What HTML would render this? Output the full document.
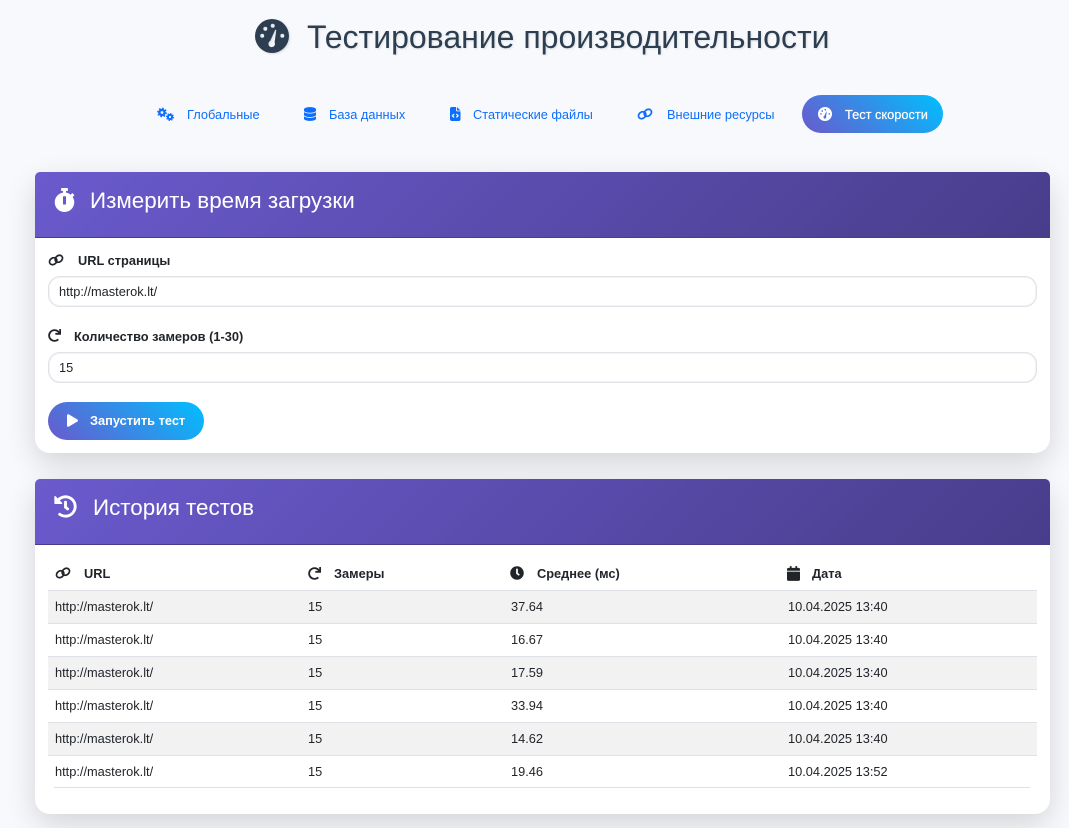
<!DOCTYPE html>
<html lang="ru"><head><meta charset="utf-8"><title>Тестирование производительности</title>
<style>
*{box-sizing:border-box}
html,body{margin:0;padding:0}
body{position:relative;width:1069px;height:828px;overflow:hidden;background:#f8f9fc;font-family:"Liberation Sans",sans-serif;font-size:12.8px;color:#212529}
.a{position:absolute;white-space:nowrap}
svg{position:absolute;display:block;fill:currentColor}
.nav{color:#0d6efd;line-height:16px;top:107px}
.pill{position:absolute;border-radius:19px;background:linear-gradient(45deg,#6a5acd,#00bfff);height:38px}
.card{position:absolute;left:35px;width:1015px;background:#fff;border-radius:15px;box-shadow:0 10px 30px rgba(0,0,0,.15)}
.hd{position:absolute;left:0;top:0;width:1015px;height:66px;border-radius:5px 5px 0 0;background:linear-gradient(135deg,#6a5acd,#483d8b);border-bottom:1px solid #483d8b}
.ttl{color:#fff;font-size:22.4px;line-height:28px}
.lbl{font-weight:bold;line-height:16px}
.inp{position:absolute;left:48px;width:989px;height:31px;border:1px solid #dfe2e6;border-radius:12px;background:#fff;padding-left:10px;line-height:29px;box-shadow:0 0 0 1px #f2f3f4 inset}
.row{position:absolute;left:48px;width:989px;height:33px;border-bottom:1px solid #dee2e6}
.row.o{background:#f2f2f2}
.row span{position:absolute;top:8px;line-height:16px;white-space:nowrap}
.th{font-weight:bold;line-height:16px;top:566px}
</style></head><body>
<svg width="0" height="0" style="position:absolute"><defs>
<symbol id="gauge" viewBox="0 0 34 34"><path fill-rule="evenodd" d="M17 0a17 17 0 1 1 0 34a17 17 0 1 1 0-34zM7.2 14.8a2 2 0 1 0 0 4a2 2 0 1 0 0-4zM10.3 7.7a2 2 0 1 0 0 4a2 2 0 1 0 0-4zM17.7 4.7a2 2 0 1 0 0 4a2 2 0 1 0 0-4zM27.3 14.8a2 2 0 1 0 0 4a2 2 0 1 0 0-4zM20 11.2L15.2 21.9a3.3 3.3 0 1 0 4.4 1.4L21.2 11.6a.6 .6 0 0 0-1.2-.4z"/></symbol>
<symbol id="link" viewBox="0 0 16 12"><g fill="none" stroke="currentColor" stroke-width="1.7"><ellipse cx="5.2" cy="7.2" rx="4" ry="3.2" transform="rotate(-38 5.2 7.2)"/><ellipse cx="10.8" cy="4.8" rx="4" ry="3.2" transform="rotate(-38 10.8 4.8)"/></g></symbol>
<symbol id="redo" viewBox="0 0 512 512"><path d="M500.33 0h-47.41a12 12 0 0 0-12 12.57l4 82.76A247.42 247.42 0 0 0 256 8C119.34 8 7.9 119.53 8 256.19 8.1 393.07 119.1 504 256 504a247.1 247.1 0 0 0 166.18-63.91 12 12 0 0 0 .48-17.43l-34-34a12 12 0 0 0-16.38-.55A176 176 0 1 1 402.1 157.8l-101.53-4.87a12 12 0 0 0-12.57 12v47.41a12 12 0 0 0 12 12h200.33a12 12 0 0 0 12-12V12a12 12 0 0 0-12-12z"/></symbol>
</defs></svg>

<svg style="left:255px;top:19px;color:#2c3e50;filter:drop-shadow(1px 1px 1px rgba(0,0,0,.12))" width="34" height="34"><use href="#gauge"/></svg>
<div class="a" style="left:307px;top:18px;font-size:32px;line-height:38px;color:#2c3e50;text-shadow:1px 1px 2px rgba(0,0,0,.1)">Тестирование производительности</div>

<svg style="left:157px;top:107px;color:#0d6efd" width="18" height="15" viewBox="0 0 18 15"><circle cx="5" cy="5.5" r="2.6" fill="none" stroke="currentColor" stroke-width="2.4"/><circle cx="5" cy="5.5" r="4.2" fill="none" stroke="currentColor" stroke-width="1.4" stroke-dasharray="1.6 1.7"/><circle cx="13" cy="10" r="2.1" fill="none" stroke="currentColor" stroke-width="2"/><circle cx="13" cy="10" r="3.5" fill="none" stroke="currentColor" stroke-width="1.1" stroke-dasharray="1.4 1.35"/></svg>
<div class="a nav" style="left:187px">Глобальные</div>
<svg style="left:304px;top:107px;color:#0d6efd" width="12" height="14" viewBox="0 0 448 512"><path d="M448 80v48c0 44.2-100.3 80-224 80S0 172.2 0 128V80C0 35.8 100.3 0 224 0S448 35.8 448 80zM393.2 214.7c20.8-7.4 39.9-16.9 54.8-28.6V288c0 44.2-100.3 80-224 80S0 332.2 0 288V186.1c14.9 11.8 34 21.2 54.8 28.6C99.7 230.7 159.5 240 224 240s124.3-9.3 169.2-25.3zM0 346.1c14.9 11.8 34 21.2 54.8 28.6C99.7 390.7 159.5 400 224 400s124.3-9.3 169.2-25.3c20.8-7.4 39.9-16.9 54.8-28.6V432c0 44.2-100.3 80-224 80S0 476.2 0 432V346.1z"/></svg>
<div class="a nav" style="left:329px">База данных</div>
<svg style="left:450px;top:107px;color:#0d6efd" width="10.5" height="14" viewBox="0 0 384 512"><path d="M64 0C28.7 0 0 28.7 0 64V448c0 35.3 28.7 64 64 64H320c35.3 0 64-28.7 64-64V160H256c-17.7 0-32-14.3-32-32V0H64zM256 0V128H384L256 0zM153 289l-31 31 31 31c9.4 9.4 9.4 24.6 0 33.9s-24.6 9.4-33.9 0L71 337c-9.4-9.4-9.4-24.6 0-33.9l48-48c9.4-9.4 24.6-9.4 33.9 0s9.4 24.6 0 33.9zM265 255l48 48c9.4 9.4 9.4 24.6 0 33.9l-48 48c-9.4 9.4-24.6 9.4-33.9 0s-9.4-24.6 0-33.9l31-31-31-31c-9.4-9.4-9.4-24.6 0-33.9s24.6-9.4 33.9 0z"/></svg>
<div class="a nav" style="left:473px">Статические файлы</div>
<svg style="left:637px;top:108px;color:#0d6efd" width="16" height="12"><use href="#link"/></svg>
<div class="a nav" style="left:667px">Внешние ресурсы</div>
<div class="pill" style="left:802px;top:95px;width:141px"></div>
<svg style="left:818px;top:107px;color:#fff" width="14" height="14"><use href="#gauge"/></svg>
<div class="a nav" style="left:845px;color:#fff;-webkit-text-stroke:.2px #fff">Тест скорости</div>

<div class="card" style="top:172px;height:281px"><div class="hd"></div></div>
<svg style="left:53.5px;top:188px;color:#fff" width="21" height="24" viewBox="0 0 448 512"><path d="M432 304c0 114.9-93.1 208-208 208S16 418.9 16 304c0-104 76.3-190.2 176-205.5V64h-28c-6.6 0-12-5.4-12-12V12c0-6.6 5.4-12 12-12h120c6.6 0 12 5.4 12 12v40c0 6.6-5.4 12-12 12h-28v34.5c37.5 5.8 71.7 21.6 99.7 44.6l27.5-27.5c4.7-4.7 12.3-4.7 17 0l28.3 28.3c4.7 4.7 4.7 12.3 0 17l-29.4 29.4-.6.6C419.7 223.3 432 262.2 432 304zm-176 36V188.5c0-6.6-5.4-12-12-12h-40c-6.6 0-12 5.4-12 12V340c0 6.6 5.4 12 12 12h40c6.6 0 12-5.4 12-12z"/></svg>
<div class="a ttl" style="left:90px;top:187px">Измерить время загрузки</div>

<svg style="left:48px;top:254px;color:#212529" width="16" height="12"><use href="#link"/></svg>
<div class="a lbl" style="left:78px;top:253px">URL страницы</div>
<div class="inp" style="top:276px">http://masterok.lt/</div>
<svg style="left:48px;top:329px;color:#212529" width="13" height="13"><use href="#redo"/></svg>
<div class="a lbl" style="left:74px;top:329px">Количество замеров (1-30)</div>
<div class="inp" style="top:352px">15</div>
<div class="pill" style="left:48px;top:402px;width:156px"></div>
<svg style="left:67px;top:414px;color:#fff" width="11" height="13" viewBox="0 0 448 512"><path d="M424.4 214.7L72.4 6.6C43.8-10.3 0 6.1 0 47.9V464c0 37.5 40.7 60.1 72.4 41.3l352-208c31.4-18.5 31.5-64.1 0-82.6z"/></svg>
<div class="a" style="left:90px;top:413px;line-height:16px;color:#fff;font-weight:bold">Запустить тест</div>

<div class="card" style="top:479px;height:335px"><div class="hd"></div></div>
<svg style="left:54px;top:495px;color:#fff" width="23" height="23" viewBox="0 0 512 512"><path d="M504 255.531c.253 136.64-111.18 248.372-247.82 248.468-59.015.042-113.223-20.53-155.822-54.911-11.077-8.94-11.905-25.541-1.839-35.607l11.267-11.267c8.609-8.609 22.353-9.551 31.891-1.984C173.062 425.135 212.781 440 256 440c101.705 0 184-82.311 184-184 0-101.705-82.311-184-184-184-48.814 0-93.149 18.969-126.068 49.932l50.754 50.754c10.08 10.08 2.941 27.314-11.313 27.314H24c-8.837 0-16-7.163-16-16V38.627c0-14.254 17.234-21.393 27.314-11.314l49.372 49.372C129.209 34.136 189.552 8 256 8c136.81 0 247.747 110.78 248 247.531zm-180.912 78.784l9.823-12.63c8.138-10.463 6.253-25.542-4.21-33.679L288 256.349V152c0-13.255-10.745-24-24-24h-16c-13.255 0-24 10.745-24 24v135.651l65.409 50.874c10.463 8.137 25.541 6.253 33.679-4.21z"/></svg>
<div class="a ttl" style="left:93px;top:494px">История тестов</div>

<svg style="left:55px;top:567px;color:#212529" width="16" height="12"><use href="#link"/></svg>
<div class="a th" style="left:84px">URL</div>
<svg style="left:308px;top:567px;color:#212529" width="13" height="13"><use href="#redo"/></svg>
<div class="a th" style="left:334px">Замеры</div>
<svg style="left:510px;top:566px;color:#212529" width="14" height="14" viewBox="0 0 512 512"><path d="M256,8C119,8,8,119,8,256S119,504,256,504,504,393,504,256,393,8,256,8Zm92.49,313h0l-20,25a16,16,0,0,1-22.49,2.5h0l-67-49.72a40,40,0,0,1-15-31.23V112a16,16,0,0,1,16-16h32a16,16,0,0,1,16,16V256l58,42.5A16,16,0,0,1,348.49,321Z"/></svg>
<div class="a th" style="left:537px">Среднее (мс)</div>
<svg style="left:787px;top:566px;color:#212529" width="13" height="15" viewBox="0 0 448 512"><path d="M12 192h424c6.6 0 12 5.4 12 12v260c0 26.5-21.5 48-48 48H48c-26.5 0-48-21.5-48-48V204c0-6.6 5.4-12 12-12zm436-44v-36c0-26.5-21.5-48-48-48h-48V12c0-6.6-5.4-12-12-12h-40c-6.6 0-12 5.4-12 12v52H160V12c0-6.6-5.4-12-12-12h-40c-6.6 0-12 5.4-12 12v52H48C21.5 64 0 85.5 0 112v36c0 6.6 5.4 12 12 12h424c6.6 0 12-5.4 12-12z"/></svg>
<div class="a th" style="left:812px">Дата</div>

<div class="a" style="left:48px;top:590px;width:989px;height:1px;background:#dee2e6"></div>
<div class="row o" style="top:591px"><span style="left:7px">http://masterok.lt/</span><span style="left:260px">15</span><span style="left:463px">37.64</span><span style="left:740px">10.04.2025 13:40</span></div>
<div class="row" style="top:624px"><span style="left:7px">http://masterok.lt/</span><span style="left:260px">15</span><span style="left:463px">16.67</span><span style="left:740px">10.04.2025 13:40</span></div>
<div class="row o" style="top:657px"><span style="left:7px">http://masterok.lt/</span><span style="left:260px">15</span><span style="left:463px">17.59</span><span style="left:740px">10.04.2025 13:40</span></div>
<div class="row" style="top:690px"><span style="left:7px">http://masterok.lt/</span><span style="left:260px">15</span><span style="left:463px">33.94</span><span style="left:740px">10.04.2025 13:40</span></div>
<div class="row o" style="top:723px"><span style="left:7px">http://masterok.lt/</span><span style="left:260px">15</span><span style="left:463px">14.62</span><span style="left:740px">10.04.2025 13:40</span></div>
<div class="row" style="top:756px;border-bottom:0;height:32px"><span style="left:7px">http://masterok.lt/</span><span style="left:260px">15</span><span style="left:463px">19.46</span><span style="left:740px">10.04.2025 13:52</span></div>
<div class="a" style="left:54px;top:787px;width:976px;height:1px;background:#dee2e6"></div>
</body></html>
